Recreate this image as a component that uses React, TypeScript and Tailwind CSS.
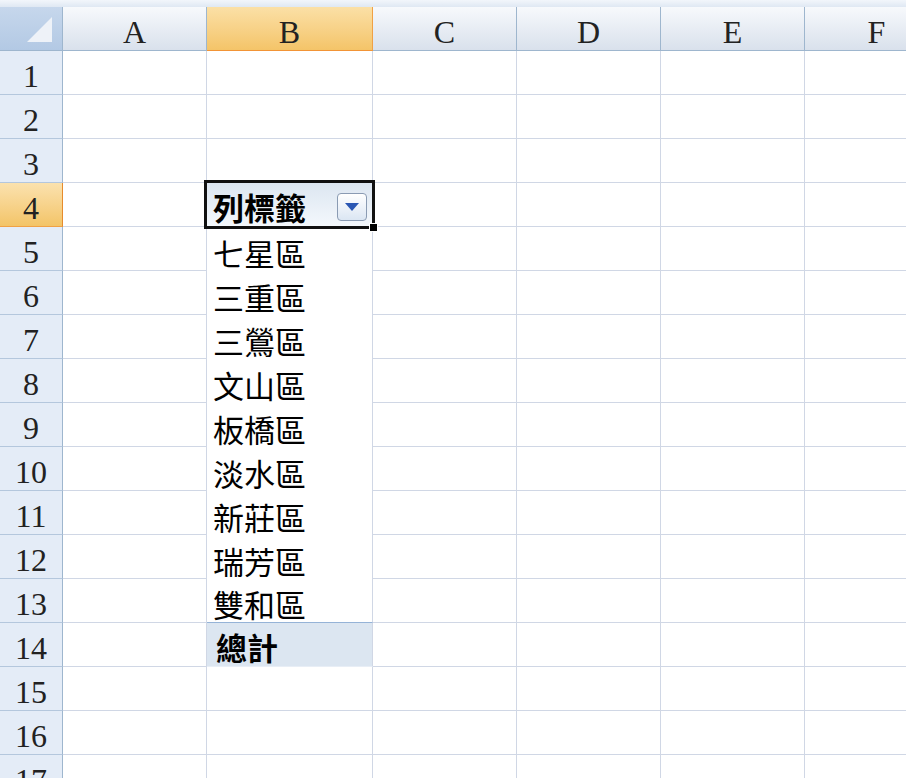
import React from 'react';

const serif = "font-['Liberation_Serif',serif]";
const cjk = "font-['Noto_Sans_CJK_TC','Noto_Sans_CJK_SC',sans-serif]";

const regions = ['七星區', '三重區', '三鶯區', '文山區', '板橋區', '淡水區', '新莊區', '瑞芳區', '雙和區'];

const Cell = ({ w, children, className = '' }: { w: string; children?: React.ReactNode; className?: string }) => (
  <div className={`${w} shrink-0 h-full border-r border-b border-[#d0d7e5] ${className}`}>{children}</div>
);

const RowHead = ({ n, active }: { n: number; active?: boolean }) => (
  <div
    className={`w-[63px] shrink-0 h-full border-r border-b flex items-center justify-center pt-[6px] text-[32px] leading-none text-[#222] ${serif} ${
      active
        ? 'bg-gradient-to-b from-[#fbe2ae] to-[#f3c467] border-[#f0a145] border-r-[#e68b2c]'
        : 'bg-[#e4ecf7] border-[#b4c7dd] border-r-[#9eb6ce]'
    }`}
  >
    {n}
  </div>
);

const DropButton = () => (
  <div className="absolute right-[5px] top-[10px] w-[30px] h-[28px] rounded-[4px] border border-[#8a9bb3] bg-gradient-to-b from-[#ffffff] to-[#dbe6f3] flex items-center justify-center">
    <svg width="14" height="8" viewBox="0 0 14 8">
      <polygon points="0,0 14,0 7,8" fill="#2b57b3" />
    </svg>
  </div>
);

export default function App() {
  const rows = Array.from({ length: 17 }, (_, i) => i + 1);

  const renderB = (r: number) => {
    if (r === 4) {
      return (
        <div className="w-[166px] shrink-0 h-full relative border-r border-b border-[#d0d7e5] bg-gradient-to-b from-[#dce6f1] to-[#f4f8fc]">
          <div className={`h-full flex items-center pl-[6px] pt-[4px] text-[31px] leading-none font-bold text-black ${cjk}`}>列標籤</div>
          <DropButton />
          <div className="absolute -left-[3px] -top-[3px] -right-[3px] -bottom-[3px] border-[3px] border-[#111] pointer-events-none" />
          <div className="absolute -right-[6px] -bottom-[6px] w-[9px] h-[9px] bg-black border border-white" />
        </div>
      );
    }
    if (r >= 5 && r <= 13) {
      return (
        <div
          className={`w-[166px] shrink-0 h-full border-r border-[#d0d7e5] bg-white flex items-center pl-[6px] pt-[6px] text-[31px] leading-none text-black ${cjk} ${
            r === 13 ? 'border-b border-b-[#95b3d7]' : ''
          }`}
        >
          {regions[r - 5]}
        </div>
      );
    }
    if (r === 14) {
      return (
        <div className={`w-[166px] shrink-0 h-full border-r border-b border-[#d0d7e5] border-b-[#e8eef6] bg-[#dce6f1] flex items-center pl-[9px] pt-[4px] text-[31px] leading-none font-bold text-black ${cjk}`}>
          總計
        </div>
      );
    }
    return <Cell w="w-[166px]" />;
  };

  const colHead = (label: string, w: string, active?: boolean) => (
    <div
      className={`${w} shrink-0 h-full border-r border-b flex items-center justify-center pt-[6px] text-[32px] leading-none text-[#222] ${serif} ${
        active
          ? 'bg-gradient-to-b from-[#fbe0a6] to-[#f4c468] border-[#f0a145] border-b-[#f29436]'
          : 'bg-gradient-to-b from-[#f7f9fc] to-[#d9e1ec] border-[#9eb6ce]'
      }`}
    >
      {label}
    </div>
  );

  return (
    <div className="w-[906px] h-[778px] overflow-hidden bg-white">
      <div className="h-[7px] bg-gradient-to-b from-[#f2f6fb] to-[#dfe8f3]" />
      <div className="flex h-[44px]">
        <div className="w-[63px] shrink-0 h-full relative border-r border-b border-[#9eb6ce] bg-gradient-to-b from-[#c6d7ec] to-[#b3c9e4]">
          <svg className="absolute right-[10px] bottom-[8px]" width="25" height="25" viewBox="0 0 25 25">
            <polygon points="25,0 25,25 0,25" fill="#eef2f8" />
          </svg>
        </div>
        {colHead('A', 'w-[144px]')}
        {colHead('B', 'w-[166px]', true)}
        {colHead('C', 'w-[144px]')}
        {colHead('D', 'w-[144px]')}
        {colHead('E', 'w-[144px]')}
        {colHead('F', 'w-[144px]')}
      </div>
      {rows.map((r) => (
        <div key={r} className="flex h-[44px]">
          <RowHead n={r} active={r === 4} />
          <Cell w="w-[144px]" />
          {renderB(r)}
          <Cell w="w-[144px]" />
          <Cell w="w-[144px]" />
          <Cell w="w-[144px]" />
          <Cell w="w-[144px]" />
        </div>
      ))}
    </div>
  );
}
